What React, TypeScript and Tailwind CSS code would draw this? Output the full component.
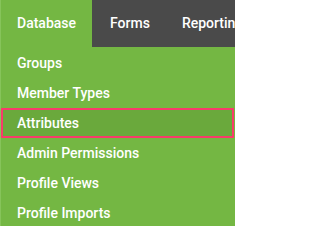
import React from "react";

const items = ["Groups", "Member Types", "Attributes", "Admin Permissions", "Profile Views", "Profile Imports"];

export default function App() {
  return (
    <div
      className="w-[235px] h-[226px] overflow-hidden bg-[#74b743] text-white border-l border-l-[#86c45a]"
      style={{ fontFamily: "Roboto, 'Liberation Sans', sans-serif" }}
    >
      <div className="flex h-[47px] whitespace-nowrap text-[14px] font-medium">
        <div className="flex items-center w-[91px] shrink-0 pl-[16px] bg-[#74b743]">Database</div>
        <div className="flex flex-1 items-center bg-[#4a4a4a] pl-[18px] gap-[32px]">
          <span>Forms</span>
          <span>Reporting</span>
        </div>
      </div>
      <div className="flex flex-col pt-[1px] text-[14px] font-medium">
        {items.map((it) =>
          it === "Attributes" ? (
            <div
              key={it}
              className="h-[30px] mr-[1px] flex items-center pl-[14px] bg-[#6aa93c] border-2 border-[#f83b6b]"
            >
              {it}
            </div>
          ) : (
            <div key={it} className="h-[30px] flex items-center pl-[16px]">
              {it}
            </div>
          )
        )}
      </div>
    </div>
  );
}
